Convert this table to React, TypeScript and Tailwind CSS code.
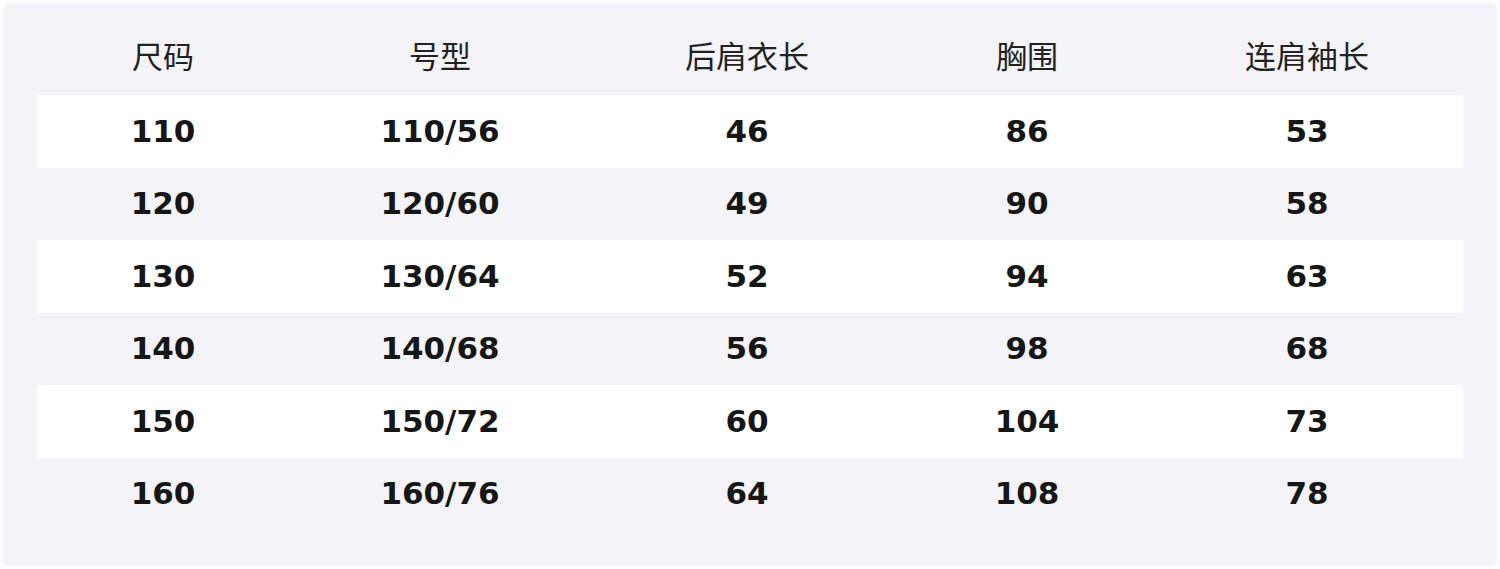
import React from "react";

const headers = ["尺码", "号型", "后肩衣长", "胸围", "连肩袖长"];
const rows = [
  ["110", "110/56", "46", "86", "53"],
  ["120", "120/60", "49", "90", "58"],
  ["130", "130/64", "52", "94", "63"],
  ["140", "140/68", "56", "98", "68"],
  ["150", "150/72", "60", "104", "73"],
  ["160", "160/76", "64", "108", "78"],
];

const cols = "grid grid-cols-[252px_302px_312px_248px_312px]";

export default function App() {
  return (
    <div className="w-[1500px] h-[569px] bg-white p-[3px]">
      <div className="h-full rounded-md bg-[#f3f3f8] px-[34px] pt-[19.5px]">
        <div
          className={`${cols} h-[72.5px] items-center pb-[8px] text-[31px] text-[#222222]`}
          style={{ fontFamily: '"Noto Sans CJK SC", "Noto Sans", sans-serif' }}
        >
          {headers.map((h) => (
            <div key={h} className="text-center leading-none">
              {h}
            </div>
          ))}
        </div>
        {rows.map((r, i) => (
          <div
            key={i}
            className={`${cols} h-[72.5px] items-center text-[31px] font-bold text-[#161616] ${
              i % 2 === 0 ? "bg-white" : "bg-transparent"
            }`}
            style={{ fontFamily: '"DejaVu Sans", sans-serif' }}
          >
            {r.map((c, j) => (
              <div key={j} className="text-center leading-none">
                {c}
              </div>
            ))}
          </div>
        ))}
      </div>
    </div>
  );
}
